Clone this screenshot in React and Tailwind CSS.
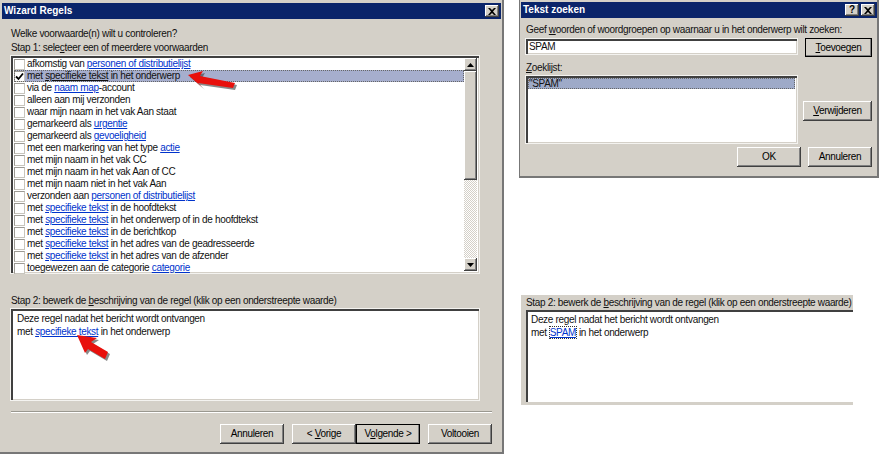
const rows = [
  ['afkomstig van ', 'personen of distributielijst', ''],
  ['met ', 'specifieke tekst', ' in het onderwerp'],
  ['via de ', 'naam map', '-account'],
  ['alleen aan mij verzonden'],
  ['waar mijn naam in het vak Aan staat'],
  ['gemarkeerd als ', 'urgentie', ''],
  ['gemarkeerd als ', 'gevoeligheid', ''],
  ['met een markering van het type ', 'actie', ''],
  ['met mijn naam in het vak CC'],
  ['met mijn naam in het vak Aan of CC'],
  ['met mijn naam niet in het vak Aan'],
  ['verzonden aan ', 'personen of distributielijst', ''],
  ['met ', 'specifieke tekst', ' in de hoofdtekst'],
  ['met ', 'specifieke tekst', ' in het onderwerp of in de hoofdtekst'],
  ['met ', 'specifieke tekst', ' in de berichtkop'],
  ['met ', 'specifieke tekst', ' in het adres van de geadresseerde'],
  ['met ', 'specifieke tekst', ' in het adres van de afzender'],
  ['toegewezen aan de categorie ', 'categorie', ''],
];

const raised = 'bg-[#d4d0c8] shadow-[inset_-1px_-1px_0_#404040,inset_1px_1px_0_#ffffff,inset_-2px_-2px_0_#808080]';
const sunken = 'bg-white shadow-[inset_2px_2px_0_#404040,inset_-1px_-1px_0_#d4d0c8,0_0_0_1px_#f4f3f0]';

function Btn({ children, w = 'w-[64px]', h = 'h-[20px]', isDefault = false }) {
  return (
    <div className={`${w} ${h} flex items-center justify-center text-black ${raised} ${isDefault ? 'outline outline-1 -outline-offset-1 outline-black' : ''}`}>
      <span>{children}</span>
    </div>
  );
}

function TitleBar({ title, help = false }) {
  return (
    <div className="h-[16px] flex items-center justify-between bg-[#0a246a] pl-[2px] pr-[2px]">
      <span className="text-white font-bold text-[10px] tracking-normal leading-none">{title}</span>
      <div className="flex gap-[2px]">
        {help && <div className={`w-[14px] h-[12px] flex items-center justify-center text-[10px] font-bold leading-none text-black ${raised}`}>?</div>}
        <div className={`w-[14px] h-[12px] flex items-center justify-center ${raised}`}>
          <svg width="8" height="7" viewBox="0 0 8 7"><path d="M0 0h2l2 2 2-2h2L5 3.500 8 7H6L4 5 2 7H0l3-3.500z" fill="#000" /></svg>
        </div>
      </div>
    </div>
  );
}

function Check({ checked }) {
  return (
    <div className="w-[11px] h-[11px] shrink-0 bg-white border border-[#9c9a94] border-r-[#c8c5bd] border-b-[#c8c5bd] flex items-center justify-center">
      {checked && (
        <svg width="9" height="9" viewBox="0 0 9 9"><path d="M1 4.500l2.500 2.500L8 1.500" fill="none" stroke="#000" strokeWidth="1.800" /></svg>
      )}
    </div>
  );
}

function Scrollbar() {
  return (
    <div className="w-[13px] h-full flex flex-col shrink-0 bg-[repeating-conic-gradient(#ffffff_0_25%,#d4d0c8_0_50%)] bg-[length:2px_2px]">
      <div className={`h-[13px] flex items-center justify-center shrink-0 ${raised}`}>
        <svg width="7" height="4" viewBox="0 0 7 4"><path d="M3.500 0L7 4H0z" fill="#000" /></svg>
      </div>
      <div className={`h-[109px] shrink-0 ${raised}`}></div>
      <div className="flex-1"></div>
      <div className={`h-[13px] flex items-center justify-center shrink-0 ${raised}`}>
        <svg width="7" height="4" viewBox="0 0 7 4"><path d="M3.500 4L7 0H0z" fill="#000" /></svg>
      </div>
    </div>
  );
}

function Step2Label() {
  return <div className="whitespace-nowrap">Stap 2: bewerk de <u>b</u>eschrijving van de regel (klik op een onderstreepte waarde)</div>;
}

function Arrow({ className, points }) {
  return (
    <svg className={`absolute ${className}`} viewBox="0 0 60 30" width="60" height="30">
      <polygon points={points} fill="#3a3a3a" opacity="0.6" transform="translate(2 2)" />
      <polygon points={points} fill="#e8100c" />
    </svg>
  );
}

export default function App() {
  return (
    <div className="relative w-[881px] h-[454px] overflow-hidden bg-white flex text-[10px] tracking-[-0.33px] leading-[12px] text-[#111] font-['Liberation_Sans',sans-serif]">
      {/* Wizard */}
      <div className="w-[504px] h-[454px] shrink-0 bg-[#d4d0c8] border-r-2 border-b-2 border-[#777] pl-[2px] pt-[3px] pr-[1px]">
        <TitleBar title="Wizard Regels" />
        <div className="pl-[9px] pr-[9px]">
          <div className="mt-[9px]">Welke voorwaarde(n) wilt u controleren?</div>
          <div className="mt-[2px]">Stap 1: sele<u>c</u>teer een of meerdere voorwaarden</div>
          <div className={`mt-[2px] w-[468px] h-[217px] p-[2px] flex ${sunken}`}>
            <div className="flex-1 pl-[1px]">
              {rows.map((r, i) => {
                const sel = i === 1;
                return (
                  <div key={i} className={`h-[12px] flex items-center gap-[2px] ${sel ? 'bg-[#a6aecd] outline-1 -outline-offset-1 outline-dotted outline-[#666]' : ''}`}>
                    <Check checked={sel} />
                    <span className="whitespace-pre">
                      {r[0]}
                      {r[1] && <span className={`underline ${sel ? '' : 'text-[#0033cc]'}`}>{r[1]}</span>}
                      {r[2]}
                    </span>
                  </div>
                );
              })}
            </div>
            <Scrollbar />
          </div>
          <div className="mt-[22px]"><Step2Label /></div>
          <div className={`mt-[2px] w-[468px] h-[91px] pl-[6px] pt-[3px] leading-[13px] ${sunken}`}>
            <div>Deze regel nadat het bericht wordt ontvangen</div>
            <div className="whitespace-pre">met <span className="underline text-[#0033cc]">specifieke tekst</span> in het onderwerp</div>
          </div>
          <div className="mt-[11px] h-[2px] bg-[linear-gradient(#9a9890_50%,#ffffff_50%)]"></div>
          <div className="mt-[11px] flex justify-end gap-[8px]">
            <Btn>Annuleren</Btn>
            <div className="flex">
              <Btn>&lt; <u>V</u>orige</Btn>
              <Btn isDefault>V<u>o</u>lgende &gt;</Btn>
            </div>
            <Btn>Voltooien</Btn>
          </div>
        </div>
      </div>

      <div className="ml-[15px] w-[362px] shrink-0 flex flex-col">
        {/* Tekst zoeken */}
        <div className="w-[360px] h-[178px] bg-[#d4d0c8] border-2 border-t-0 border-l border-[#777] pt-[2px] pl-[1px]">
          <TitleBar title="Tekst zoeken" help />
          <div className="pl-[5px] pr-[5px]">
            <div className="mt-[6px] whitespace-nowrap">Geef <u>w</u>oorden of woordgroepen op waarnaar u in het onderwerp wilt zoeken:</div>
            <div className="mt-[2px] flex items-start justify-between">
              <div className={`w-[271px] h-[15px] mt-[1px] pl-[3px] flex items-center ${sunken}`}>SPAM</div>
              <Btn w="w-[67px]" h="h-[19px]" isDefault><u>T</u>oevoegen</Btn>
            </div>
            <div className="mt-[5px]"><u>Z</u>oeklijst:</div>
            <div className="flex justify-between">
              <div className={`mt-[2px] w-[271px] h-[67px] p-[2px] ${sunken}`}>
                <div className="h-[11px] bg-[#9eaac8] outline-1 -outline-offset-1 outline-dotted outline-[#666] flex items-center pl-[1px]">"SPAM"</div>
              </div>
              <div className="mt-[27px]"><Btn w="w-[69px]"><u>V</u>erwijderen</Btn></div>
            </div>
            <div className="mt-[4px] flex justify-end gap-[7px]">
              <Btn>OK</Btn>
              <Btn>Annuleren</Btn>
            </div>
          </div>
        </div>

        {/* Stap 2 detail */}
        <div className="ml-[2px] mt-[117px] w-[332px] h-[110px] bg-[#d4d0c8] pl-[5px] pt-[2px]">
          <Step2Label />
          <div className="mt-[1px] h-[92px] pl-[5px] pt-[3px] leading-[13px] bg-white shadow-[inset_2px_2px_0_#404040]">
            <div>Deze regel nadat het bericht wordt ontvangen</div>
            <div className="whitespace-pre">met<span className="underline text-[#0033cc] outline-1 outline-dotted outline-[#333] mx-[3px]">SPAM</span>in het onderwerp</div>
          </div>
        </div>
      </div>

      <Arrow className="left-[186px] top-[66px]" points="2,9 17,5 14,10 49,17 47,22 12,17 17,22" />
      <Arrow className="left-[75px] top-[333px]" points="2,2 22,5 16,9 33,19 30,26 13,16 10,20" />
    </div>
  );
}
